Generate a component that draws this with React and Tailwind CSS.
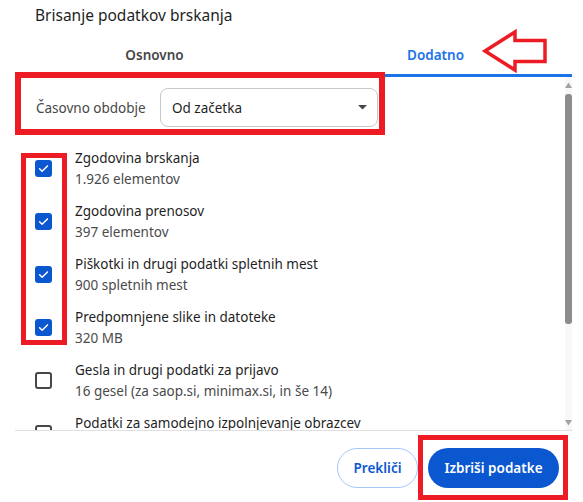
export default function App() {
  const items = [
    { label: "Zgodovina brskanja", sub: "1.926 elementov", checked: true },
    { label: "Zgodovina prenosov", sub: "397 elementov", checked: true },
    { label: "Piškotki in drugi podatki spletnih mest", sub: "900 spletnih mest", checked: true },
    { label: "Predpomnjene slike in datoteke", sub: "320 MB", checked: true },
    { label: "Gesla in drugi podatki za prijavo", sub: "16 gesel (za saop.si, minimax.si, in še 14)", checked: false },
    { label: "Podatki za samodejno izpolnjevanje obrazcev", sub: "2 naslova, 14 drugih predlogov", checked: false },
  ];

  return (
    <div className="relative w-[583px] h-[502px] overflow-hidden bg-white font-['Noto_Sans',sans-serif] text-[#1f1f1f]">
      {/* Title */}
      <div className="pt-[3px] pl-[35px] text-[15.5px] leading-6 text-[#1f1f1f]">Brisanje podatkov brskanja</div>

      {/* Tabs */}
      <div className="flex h-[47px] items-end pb-[9px] pl-[14px]">
        <div className="w-[281px] text-center text-[13.5px] leading-5 font-semibold text-[#474747]">Osnovno</div>
        <div className="w-[281px] text-center text-[13.5px] leading-5 font-semibold text-[#1a73e8]">Dodatno</div>
      </div>
      <div className="ml-[295px] h-[3px] w-[277px] bg-[#1a73e8]" />

      {/* Scroll area */}
      <div className="flex h-[353px] w-[572px]">
        <div className="flex-1 overflow-hidden">
          {/* Time range */}
          <div className="flex items-center pt-[11px] pl-[36px]">
            <div className="w-[124px] text-[13.5px] leading-5 text-[#474747]">Časovno obdobje</div>
            <div className="flex h-[39px] w-[218px] items-center justify-between rounded-[8px] border border-[#c7c7c7] pl-[11px] pr-[10px]">
              <span className="text-[13.5px] leading-5 text-[#1f1f1f]">Od začetka</span>
              <svg width="9" height="5" viewBox="0 0 9 5">
                <polygon points="0,0 9,0 4.5,4.5" fill="#474747" />
              </svg>
            </div>
          </div>

          {/* Items */}
          <div className="pt-[15px]">
            {items.map((it) => (
              <div key={it.label} className="flex h-[53px] items-center pl-[35px]">
                {it.checked ? (
                  <div className="flex h-[17px] w-[17px] shrink-0 items-center justify-center rounded-[3px] bg-[#0b57d0]">
                    <svg width="13" height="13" viewBox="0 0 16 16">
                      <path d="M3.2 8.3l3.1 3.1L12.9 4.8" fill="none" stroke="#ffffff" strokeWidth="1.8" strokeLinecap="round" strokeLinejoin="round" />
                    </svg>
                  </div>
                ) : (
                  <div className="h-[17px] w-[17px] shrink-0 rounded-[3px] border-2 border-[#474747]" />
                )}
                <div className="ml-[23px]">
                  <div className="text-[13.5px] leading-5 text-[#1f1f1f] whitespace-nowrap">{it.label}</div>
                  <div className="mt-px text-[13.5px] leading-5 text-[#4a4a4a] whitespace-nowrap">{it.sub}</div>
                </div>
              </div>
            ))}
          </div>
        </div>

        {/* Scrollbar */}
        <div className="flex w-[7px] flex-col items-center bg-[#f8f8f8] pt-[5px] pb-[4px]">
          <svg width="7" height="6" viewBox="0 0 7 6">
            <polygon points="3.5,0.5 7,6 0,6" fill="#a3a3a3" />
          </svg>
          <div className="mt-[6px] h-[230px] w-[7px] rounded-[3px] bg-[#8c8c8c]" />
          <div className="flex-1" />
          <svg width="7" height="6" viewBox="0 0 7 6">
            <polygon points="0,0 7,0 3.5,5.5" fill="#a3a3a3" />
          </svg>
        </div>
      </div>

      {/* Divider */}
      <div className="ml-[15px] h-px w-[557px] bg-[#e0e0e0]" />

      {/* Footer */}
      <div className="flex justify-end gap-[10px] pt-[17px] pr-[24px]">
        <button className="h-[40px] w-[81px] rounded-full border border-[#a8c7fa] text-[13.5px] font-semibold text-[#0b57d0]">Prekliči</button>
        <button className="h-[40px] w-[131px] rounded-full bg-[#0b57d0] text-[13.5px] font-semibold text-white">Izbriši podatke</button>
      </div>

      {/* Annotations */}
      <div className="absolute left-[15px] top-[72px] h-[63px] w-[370px] border-[6px] border-[#ed1c24]" />
      <div className="absolute left-[21px] top-[153px] h-[192px] w-[46px] border-[5px] border-[#ed1c24]" />
      <div className="absolute left-[418px] top-[435px] h-[65px] w-[150px] border-[5px] border-[#ed1c24]" />
      <svg className="absolute left-[480px] top-[28px]" width="70" height="46" viewBox="0 0 70 46">
        <polygon points="5,23 35,4 35,12.5 65,12.5 65,33.5 35,33.5 35,42" fill="#ffffff" stroke="#ed1c24" strokeWidth="3.5" strokeLinejoin="miter" />
      </svg>
    </div>
  );
}
